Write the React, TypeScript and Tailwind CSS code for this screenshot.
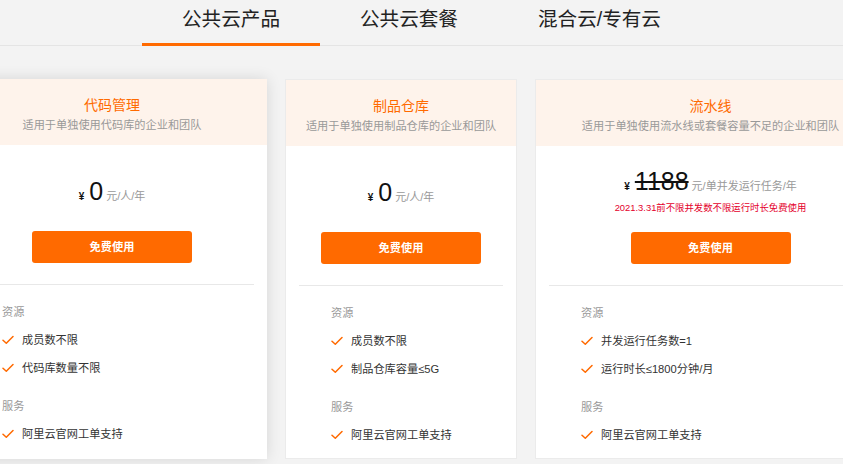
import React from "react";

type Plan = {
  title: string;
  desc: string;
  price: string;
  unit: string;
  strike?: boolean;
  promo?: string;
  width: string;
  hover?: boolean;
  resources: string[];
  services: string[];
};

const plans: Plan[] = [
  {
    title: "代码管理",
    desc: "适用于单独使用代码库的企业和团队",
    price: "0",
    unit: "元/人/年",
    width: "w-[310px]",
    hover: true,
    resources: ["成员数不限", "代码库数量不限"],
    services: ["阿里云官网工单支持"],
  },
  {
    title: "制品仓库",
    desc: "适用于单独使用制品仓库的企业和团队",
    price: "0",
    unit: "元/人/年",
    width: "w-[232px]",
    resources: ["成员数不限", "制品仓库容量≤5G"],
    services: ["阿里云官网工单支持"],
  },
  {
    title: "流水线",
    desc: "适用于单独使用流水线或套餐容量不足的企业和团队",
    price: "1188",
    unit: "元/单并发运行任务/年",
    strike: true,
    promo: "2021.3.31前不限并发数不限运行时长免费使用",
    width: "w-[351px]",
    resources: ["并发运行任务数=1", "运行时长≤1800分钟/月"],
    services: ["阿里云官网工单支持"],
  },
];

const Check = () => (
  <svg width="12" height="10" viewBox="0 0 12 10" fill="none" className="shrink-0">
    <path d="M1 5.2 L4.3 8.3 L11 1.5" stroke="#ff6a00" strokeWidth={1.5} strokeLinecap="round" strokeLinejoin="round" />
  </svg>
);

const Item = ({ text }: { text: string }) => (
  <div className="flex h-[28px] items-center gap-[8px] text-[11.2px] text-[#333]">
    <Check />
    <span>{text}</span>
  </div>
);

const Card = ({ plan }: { plan: Plan }) => (
  <div
    className={`${plan.width} shrink-0 bg-white ${
      plan.hover ? "shadow-[0_0_14px_rgba(0,0,0,0.12)]" : "border border-[#ebebeb]"
    }`}
  >
    <div className="flex h-[66px] flex-col items-center justify-center bg-[#fef3eb] pt-[6px]">
      <div className="text-[14px] leading-[20px] text-[#ff6a00]">{plan.title}</div>
      <div className="text-[11.2px] leading-[20px] text-[#999]">{plan.desc}</div>
    </div>
    <div className="flex h-[86px] flex-col items-center justify-center pt-[6px]">
      <div className="flex h-[30px] items-baseline">
        <span className="mr-[5px] text-[10px] font-bold text-[#111]">¥</span>
        <span
          className={`text-[25px] leading-[30px] text-[#111] ${
            plan.strike ? "line-through decoration-[1.5px]" : ""
          }`}
        >
          {plan.price}
        </span>
        <span className="ml-[3px] text-[11px] text-[#999]">{plan.unit}</span>
      </div>
      {plan.promo && (
        <div className="mt-[2px] text-[9.4px] leading-[20px] text-[#e4002b]">{plan.promo}</div>
      )}
    </div>
    <button className="mx-auto flex h-[32px] w-[160px] items-center justify-center rounded-[3px] bg-[#ff6a00] text-[11.2px] font-bold text-white">
      免费使用
    </button>
    <div className="mx-[13px] mt-[21px] h-px bg-[#e8e8e8]" />
    <div className="pb-[9px] pl-[45px] pt-[13px]">
      <div className="flex h-[28px] items-center text-[11.2px] text-[#999]">资源</div>
      {plan.resources.map((r) => (
        <Item key={r} text={r} />
      ))}
      <div className="mt-[10px] flex h-[28px] items-center text-[11.2px] text-[#999]">服务</div>
      {plan.services.map((r) => (
        <Item key={r} text={r} />
      ))}
    </div>
  </div>
);

export default function App() {
  const tabs = ["公共云产品", "公共云套餐", "混合云/专有云"];
  return (
    <div className="h-[464px] w-full overflow-hidden bg-[#f3f3f3] font-['Liberation_Sans','Noto_Sans_CJK_SC',sans-serif]">
      <div className="flex h-[46px] justify-center border-b border-[#e4e4e4]">
        {tabs.map((t, i) => (
          <div
            key={t}
            className={`-mb-px flex items-center px-[40px] pb-[3px] text-[19.6px] text-[#222] ${
              i === 0 ? "border-b-[3px] border-[#ff6a00]" : "border-b-[3px] border-transparent"
            }`}
          >
            {t}
          </div>
        ))}
      </div>
      <div className="mt-[33px] flex justify-center gap-[18px]">
        {plans.map((p) => (
          <Card key={p.title} plan={p} />
        ))}
      </div>
    </div>
  );
}
